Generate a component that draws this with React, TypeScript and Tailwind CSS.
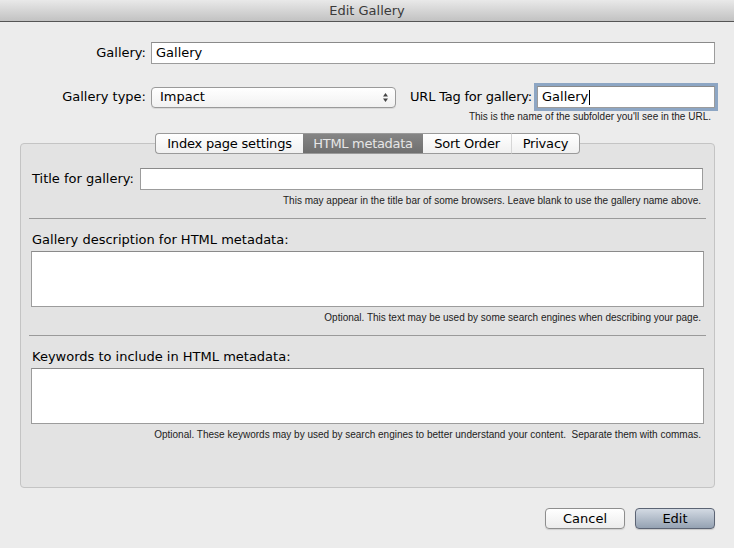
import React from "react";

const font = { fontFamily: '"DejaVu Sans", "Liberation Sans", sans-serif' };
const hintFont = { fontFamily: '"Liberation Sans", "DejaVu Sans", sans-serif' };

const TextBox: React.FC<{ value?: string; className?: string; focused?: boolean }> = ({
  value,
  className = "",
  focused,
}) => (
  <div
    className={`h-[22px] bg-white border border-[#9c9c9c] border-t-[#8a8a8a] flex items-center px-[4px] text-[13px] text-black ${
      focused ? "shadow-[0_0_0_3px_#8da6c4]" : ""
    } ${className}`}
  >
    {value}
    {focused && <span className="inline-block w-px h-[15px] bg-black ml-px" />}
  </div>
);

const Hint: React.FC<{ children: React.ReactNode; className?: string }> = ({ children, className = "" }) => (
  <div className={`text-[10px] text-[#222] text-right leading-[12px] ${className}`} style={hintFont}>
    {children}
  </div>
);

const Separator = () => <div className="h-px bg-[#9a9a9a] mx-[8px]" />;

const tabs = [
  { label: "Index page settings", w: "w-[148px]" },
  { label: "HTML metadata", w: "w-[120px]" },
  { label: "Sort Order", w: "w-[89px]" },
  { label: "Privacy", w: "w-[68px]" },
];

export default function App() {
  const selected = 1;

  return (
    <div className="w-[734px] h-[548px] bg-[#ececec] flex flex-col overflow-hidden" style={font}>
      {/* title bar */}
      <div className="h-[22px] shrink-0 bg-gradient-to-b from-[#e9e9e9] to-[#c2c2c2] border-b border-[#555] flex items-center justify-center text-[13px] text-[#3a3a3a]">
        Edit Gallery
      </div>

      {/* top fields */}
      <div className="flex items-center mt-[20px]">
        <div className="w-[146px] text-right text-[13px] text-black">Gallery:</div>
        <TextBox value="Gallery" className="ml-[5px] w-[564px]" />
      </div>

      <div className="flex items-center mt-[22px]">
        <div className="w-[146px] text-right text-[13px] text-black">Gallery type:</div>
        <div className="ml-[5px] w-[245px] h-[21px] rounded-[4px] border border-[#9a9a9a] bg-gradient-to-b from-white to-[#f1f1f1] flex items-center justify-between pl-[8px] pr-[6px] text-[13px] shadow-[0_1px_0_rgba(0,0,0,0.08)]">
          <span>Impact</span>
          <svg width="7" height="11" viewBox="0 0 7 11">
            <path d="M3.5 1 L6 4.5 H1 Z" fill="#444" />
            <path d="M3.5 10 L6 6.5 H1 Z" fill="#444" />
          </svg>
        </div>
        <div className="flex-1 flex items-center justify-end pr-[19px]">
          <div className="text-[13px] text-black tracking-[-0.2px]">URL Tag for gallery:</div>
          <TextBox value="Gallery" focused className="ml-[5px] w-[178px]" />
        </div>
      </div>
      <Hint className="mt-[3px] pr-[23px]">This is the name of the subfolder you'll see in the URL.</Hint>

      {/* tabs */}
      <div className="relative z-10 flex ml-[155px] mt-[10px] -mb-[11px] h-[21px]">
        {tabs.map((t, i) => {
          const isSel = i === selected;
          const first = i === 0;
          const last = i === tabs.length - 1;
          return (
            <div
              key={t.label}
              className={`${t.w} h-[21px] flex items-center justify-center text-[13px] border-y border-[#9a9a9a] ${
                first ? "border-l rounded-l-[4px]" : ""
              } ${last ? "border-r rounded-r-[4px]" : ""} ${i === 2 ? "border-r border-r-[#d6d6d6]" : ""} ${
                isSel
                  ? "bg-gradient-to-b from-[#858585] to-[#6f6f6f] text-[#e6e6e6] border-[#6a6a6a] tracking-[-0.3px]"
                  : "bg-gradient-to-b from-white to-[#f0f0f0] text-black tracking-[-0.2px]"
              }`}
            >
              {t.label}
            </div>
          );
        })}
      </div>

      {/* panel */}
      <div className="ml-[20px] w-[695px] h-[345px] rounded-[4px] border border-[#c4c4c4] bg-[#e3e3e3] flex flex-col">
        <div className="flex items-center mt-[24px] px-[11px]">
          <div className="text-[13px] text-black">Title for gallery:</div>
          <TextBox className="ml-[6px] flex-1" />
        </div>
        <Hint className="mt-[5px] pr-[13px]">
          This may appear in the title bar of some browsers. Leave blank to use the gallery name above.
        </Hint>
        <div className="mt-[11px]">
          <Separator />
        </div>

        <div className="mt-[13px] px-[11px] text-[13px] text-black leading-[16px]">
          Gallery description for HTML metadata:
        </div>
        <div className="mt-[3px] mx-[10px] h-[56px] bg-white border border-[#9c9c9c] border-t-[#8a8a8a]" />
        <Hint className="mt-[5px] pr-[13px]">
          Optional. This text may be used by some search engines when describing your page.
        </Hint>
        <div className="mt-[11px]">
          <Separator />
        </div>

        <div className="mt-[13px] px-[11px] text-[13px] text-black leading-[16px]">
          Keywords to include in HTML metadata:
        </div>
        <div className="mt-[3px] mx-[10px] h-[56px] bg-white border border-[#9c9c9c] border-t-[#8a8a8a]" />
        <Hint className="mt-[5px] pr-[13px]">
          Optional. These keywords may by used by search engines to better understand your content.&nbsp; Separate them with commas.
        </Hint>
      </div>

      {/* buttons */}
      <div className="flex justify-end gap-[10px] mt-[20px] pr-[19px]">
        <div className="w-[80px] h-[21px] rounded-[4px] border border-[#8e8e8e] bg-gradient-to-b from-white to-[#ececec] flex items-center justify-center text-[13px] text-black shadow-[0_1px_1px_rgba(0,0,0,0.12)]">
          Cancel
        </div>
        <div className="w-[80px] h-[21px] rounded-[4px] border border-[#5c6474] bg-gradient-to-b from-[#d3dae3] to-[#95a2b3] flex items-center justify-center text-[13px] text-black shadow-[0_1px_1px_rgba(0,0,0,0.15)]">
          Edit
        </div>
      </div>
    </div>
  );
}
